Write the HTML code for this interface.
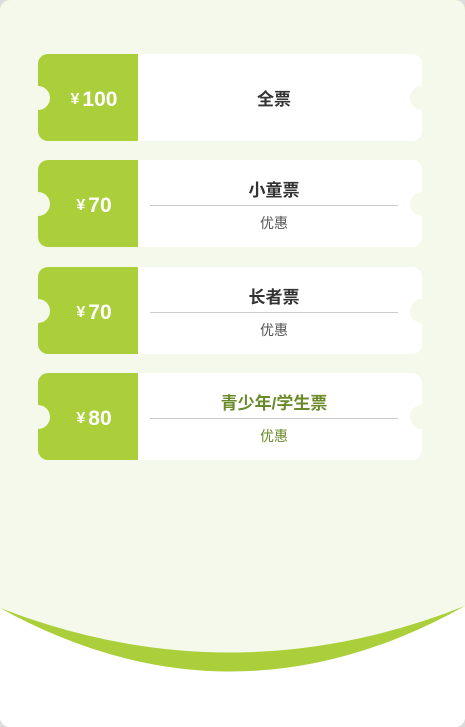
<!DOCTYPE html>
<html><head><meta charset="utf-8"><style>
html,body{margin:0;padding:0;width:465px;height:727px;overflow:hidden;background:#ddd;}
.page{position:absolute;left:0;top:0;width:465px;height:727px;background:#fff;border-radius:10px;overflow:hidden;font-family:"Liberation Sans","Noto Sans CJK SC",sans-serif;}
svg.bg{position:absolute;left:0;top:0;}
.card{position:absolute;left:38px;width:384px;height:87px;background:#fff;border-radius:10px;overflow:hidden;}
.card .l{position:absolute;left:0;top:2px;width:100px;height:100%;color:#fff;font-weight:bold;font-size:21px;display:flex;align-items:center;justify-content:center;padding-left:12px;box-sizing:border-box;}
.card .g{position:absolute;left:0;top:0;width:100px;height:100%;background:#aacf3b;}
.card .l small{font-size:16px;margin-right:3px;}
.notch{position:absolute;top:32px;width:24px;height:24px;border-radius:50%;background:#f5f9eb;}
.t{position:absolute;left:112px;width:248px;text-align:center;}
.t1{top:16px;font-size:17px;font-weight:bold;color:#333;}
.hr{position:absolute;left:112px;width:248px;top:45px;border-top:1px solid #ccc;}
.t2{top:53px;font-size:14px;color:#555;}
</style></head><body><div class="page">
<svg class="bg" width="465" height="727"><rect width="465" height="727" fill="#fff"/>
<path d="M0 0H465V606Q232 736 0 608Z" fill="#aacf3b"/>
<path d="M0 0H465V606Q232 698 0 608Z" fill="#f5f9eb"/></svg>
<div class="card" style="top:54px"><div class="g"></div><div class="l"><small>¥</small>100</div><div class="notch" style="left:-12px"></div><div class="notch" style="right:-12px"></div><div class="t t1" style="top:31px">全票</div></div>
<div class="card" style="top:160px"><div class="g"></div><div class="l"><small>¥</small>70</div><div class="notch" style="left:-12px"></div><div class="notch" style="right:-12px"></div><div class="t t1">小童票</div><div class="hr"></div><div class="t t2">优惠</div></div>
<div class="card" style="top:267px"><div class="g"></div><div class="l"><small>¥</small>70</div><div class="notch" style="left:-12px"></div><div class="notch" style="right:-12px"></div><div class="t t1">长者票</div><div class="hr"></div><div class="t t2">优惠</div></div>
<div class="card" style="top:373px"><div class="g"></div><div class="l"><small>¥</small>80</div><div class="notch" style="left:-12px"></div><div class="notch" style="right:-12px"></div><div class="t t1" style="color:#6b8a2a">青少年/学生票</div><div class="hr"></div><div class="t t2" style="color:#6b8a2a">优惠</div></div>
</div></body></html>
